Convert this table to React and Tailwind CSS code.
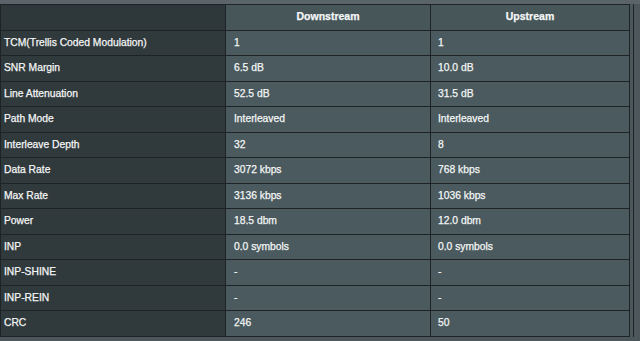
import React from "react";

const rows = [
  ["TCM(Trellis Coded Modulation)", "1", "1"],
  ["SNR Margin", "6.5 dB", "10.0 dB"],
  ["Line Attenuation", "52.5 dB", "31.5 dB"],
  ["Path Mode", "Interleaved", "Interleaved"],
  ["Interleave Depth", "32", "8"],
  ["Data Rate", "3072 kbps", "768 kbps"],
  ["Max Rate", "3136 kbps", "1036 kbps"],
  ["Power", "18.5 dbm", "12.0 dbm"],
  ["INP", "0.0 symbols", "0.0 symbols"],
  ["INP-SHINE", "-", "-"],
  ["INP-REIN", "-", "-"],
  ["CRC", "246", "50"],
];

export default function App() {
  return (
    <div
      className="w-[640px] h-[341px] overflow-hidden bg-[#4b575b] flex flex-col text-[10.3px] text-[#f4f6f6] [-webkit-text-stroke:0.25px_#f4f6f6]"
      style={{ fontFamily: '"Liberation Sans", Arial, sans-serif' }}
    >
      <div className="h-[4px] bg-[#5b6468] shrink-0" />
      <div className="flex">
        <div className="w-[634px] border-r border-[#1e2325] flex flex-col">
          <div className="w-[630px] bg-[#1e2325] p-px grid grid-cols-[224px_204px_198px] auto-rows-[24.54px] gap-px">
            <div className="bg-[#2e373a]" />
            <div className="bg-[#465659] flex items-center justify-center font-bold text-[10.5px] pb-px">Downstream</div>
            <div className="bg-[#465659] flex items-center justify-center font-bold text-[10.5px] pb-px">Upstream</div>
            {rows.map(([k, a, b]) => (
              <React.Fragment key={k}>
                <div className="bg-[#30393c] flex items-center pl-[3px] pb-px">{k}</div>
                <div className="bg-[#4a5a5e] flex items-center pl-[8px] pb-px">{a}</div>
                <div className="bg-[#4a5a5e] flex items-center pl-[7px] pb-px">{b}</div>
              </React.Fragment>
            ))}
          </div>
        </div>
      </div>
    </div>
  );
}
